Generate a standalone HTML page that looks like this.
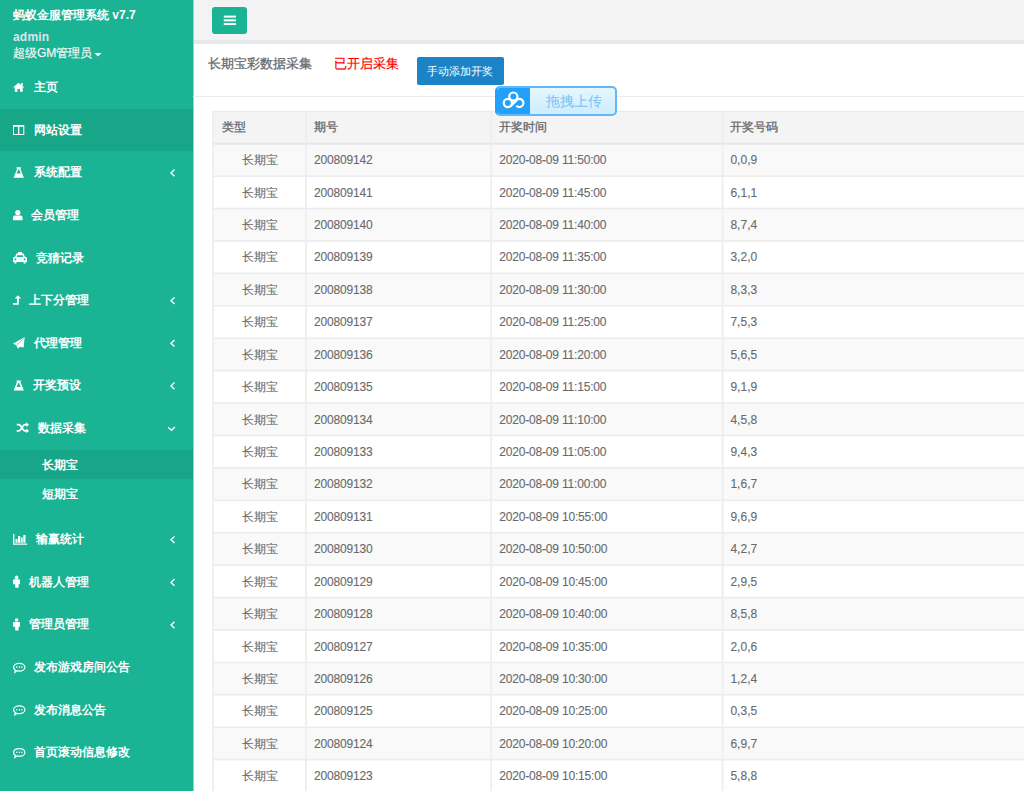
<!DOCTYPE html>
<html><head><meta charset="utf-8"><style>
html,body{margin:0;padding:0;width:1024px;height:791px;overflow:hidden;background:#fff;font-family:"Liberation Sans",sans-serif;}
#sb{position:absolute;left:0;top:0;width:193px;height:791px;background:#1ab394;color:#fff;overflow:hidden}
.nt{position:absolute;font-size:12px;line-height:18px;font-weight:bold;color:#fff;white-space:nowrap}
#top{position:absolute;left:194px;top:0;width:830px;height:40px;background:#f3f3f4;border-bottom:4px solid #e7eaec}
.th{position:absolute;font-size:12px;line-height:18px;color:#676a6c;white-space:nowrap;-webkit-text-stroke:0.3px #676a6c}
.td{position:absolute;font-size:12px;line-height:18px;color:#676a6c;white-space:nowrap;-webkit-text-stroke:0.1px #676a6c;letter-spacing:-0.18px}
</style></head><body>
<div id="sb">
<div style="position:absolute;left:13px;top:6px;font-size:12px;line-height:18px;font-weight:bold;white-space:nowrap">蚂蚁金服管理系统 v7.7</div>
<div style="position:absolute;left:13px;top:28px;font-size:12px;line-height:18px;font-weight:bold;color:#dfe4ed;letter-spacing:0.2px">admin</div>
<div style="position:absolute;left:13px;top:43.6px;font-size:12px;line-height:18px;color:#f3f6f6;white-space:nowrap;-webkit-text-stroke:0.2px #f3f6f6">超级GM管理员</div>
<svg style="position:absolute;left:0;top:0" width="120" height="70"><path d="M94.5 52.9H101.6L98.05 56.6Z" fill="#fff"/></svg>
<div style="position:absolute;left:0;top:109px;width:193px;height:42.2px;background:#18a689"></div>
<div class="nt" style="left:33.6px;top:78.10px">主页</div>
<div class="nt" style="left:33.6px;top:120.70px">网站设置</div>
<div class="nt" style="left:33.6px;top:163.30px">系统配置</div>
<div class="nt" style="left:31.2px;top:205.90px">会员管理</div>
<div class="nt" style="left:36.2px;top:248.50px">竞猜记录</div>
<div class="nt" style="left:29.2px;top:291.10px">上下分管理</div>
<div class="nt" style="left:34.2px;top:333.70px">代理管理</div>
<div class="nt" style="left:33.4px;top:376.30px">开奖预设</div>
<div class="nt" style="left:38.4px;top:418.90px">数据采集</div>
<div style="position:absolute;left:0;top:450.00px;width:193px;height:29.3px;background:#18a689"></div>
<div class="nt" style="left:41.9px;top:455.65px">长期宝</div>
<div class="nt" style="left:41.9px;top:484.95px">短期宝</div>
<div class="nt" style="left:36.4px;top:530.20px">输赢统计</div>
<div class="nt" style="left:28.6px;top:572.80px">机器人管理</div>
<div class="nt" style="left:28.7px;top:615.40px">管理员管理</div>
<div class="nt" style="left:34.3px;top:658.00px">发布游戏房间公告</div>
<div class="nt" style="left:34.3px;top:700.60px">发布消息公告</div>
<div class="nt" style="left:34.3px;top:743.20px">首页滚动信息修改</div>
<svg style="position:absolute;left:0;top:0" width="193" height="791" viewBox="0 0 193 791" fill="#fff"><path d="M2.96 9.56 L8.53 4.7 L11.1 6.9 V5.1 H12.74 V8.3 L14.33 9.56 H12.74 V13.65 H10 V10.9 H7.5 V13.65 H4.78 V9.56 Z" transform="translate(10,78)"/><path d="M13 124.9H24.3V134.9H13Z M14 126.8V133.9H18.1V126.8Z M19.3 126.8V133.9H23.3V126.8Z" fill-rule="evenodd"/><path transform="translate(10,162)" d="M6.6 5.3 H10.9 V6.8 H10.3 L13.9 15.7 H3.5 L7.2 6.8 H6.6 Z M8.25 7.5 H9.15 L10.85 11.6 H6.55 Z" fill-rule="evenodd"/><circle cx="17.8" cy="212.6" r="2.6"/><path d="M13 220.2V217.8C13 216.2 14.3 215.6 15.4 215.6H20.2C21.3 215.6 22.6 216.2 22.6 217.8V220.2Z"/><path transform="translate(13,251.9)" d="M5 0H9V1.6H10.5L12 5H12.6C13.4 5 14 5.6 14 6.4V10H12.6V11.5H10.6V10H3.4V11.5H1.4V10H0V6.4C0 5.6 .6 5 1.4 5H2L3.5 1.6H5Z M4.3 3.4L3.6 5H10.4L9.7 3.4Z M1.5 6.6V8.4H3.3V6.6Z M10.7 6.6V8.4H12.5V6.6Z" fill-rule="evenodd"/><path d="M14.7 298.6 L17.9 295.3 L21.1 298.6 H18.8 V304.7 H13 V303.1 H17.1 V298.6 Z"/><path d="M24.7 337.1 L13 343.7 L16.1 345.1 L18 348.7 L20 346.7 L23.6 347.6 Z"/><path d="M16.6 345.2 L23.9 338.2" stroke="#1ab394" stroke-width="0.6"/><path d="M16.6 380.6 H20.8 V381.8 H20.3 L23.9 390.6 H13.6 L17.1 381.8 H16.6 Z M18.25 382.9 H19.15 L20.7 387.0 H16.7 Z" fill-rule="evenodd"/><g fill="none" stroke="#fff" stroke-width="1.7"><path d="M16.7 424.7 H19 C21.2 424.7 22.6 430.8 24.8 430.8 H26.6"/><path d="M16.7 430.8 H19 C21.2 430.8 22.6 424.7 24.8 424.7 H26.6"/></g><path d="M26.2 422.3 L29 424.7 L26.2 427.1 Z M26.2 428.4 L29 430.8 L26.2 433.2 Z"/><path d="M13 534H14.4V543.6H27.2V544.7H13Z M15.5 539.1H17.5V542.7H15.5Z M18 535.9H20.2V542.7H18Z M20.8 537.5H22.7V542.7H20.8Z M23.3 535.1H25.5V542.7H23.3Z"/><g transform="translate(0,0)"><circle cx="16.6" cy="577.4" r="1.8"/><path d="M14 579.3H19.2C19.7 579.3 20 579.6 20 580.1V584.2H18.6V587.8H15.2V584.2H13V580.1C13 579.6 13.3 579.3 14 579.3Z"/></g><g transform="translate(0,42.60000000000002)"><circle cx="16.6" cy="577.4" r="1.8"/><path d="M14 579.3H19.2C19.7 579.3 20 579.6 20 580.1V584.2H18.6V587.8H15.2V584.2H13V580.1C13 579.6 13.3 579.3 14 579.3Z"/></g><g transform="translate(0,0)"><path d="M19.25 663.3C22.4 663.3 24.9 665 24.9 667.2S22.4 671 19.25 671C18.4 671 17.6 670.9 16.9 670.7L14.9 672.2L15.3 670C14.1 669.3 13.6 668.3 13.6 667.2C13.6 665 16.1 663.3 19.25 663.3Z" fill="none" stroke="#fff" stroke-width="1.25"/><circle cx="16.7" cy="667.1" r=".8"/><circle cx="19.4" cy="667.1" r=".8"/><circle cx="21.9" cy="667.1" r=".8"/></g><g transform="translate(0,42.60000000000002)"><path d="M19.25 663.3C22.4 663.3 24.9 665 24.9 667.2S22.4 671 19.25 671C18.4 671 17.6 670.9 16.9 670.7L14.9 672.2L15.3 670C14.1 669.3 13.6 668.3 13.6 667.2C13.6 665 16.1 663.3 19.25 663.3Z" fill="none" stroke="#fff" stroke-width="1.25"/><circle cx="16.7" cy="667.1" r=".8"/><circle cx="19.4" cy="667.1" r=".8"/><circle cx="21.9" cy="667.1" r=".8"/></g><g transform="translate(0,85.20000000000005)"><path d="M19.25 663.3C22.4 663.3 24.9 665 24.9 667.2S22.4 671 19.25 671C18.4 671 17.6 670.9 16.9 670.7L14.9 672.2L15.3 670C14.1 669.3 13.6 668.3 13.6 667.2C13.6 665 16.1 663.3 19.25 663.3Z" fill="none" stroke="#fff" stroke-width="1.25"/><circle cx="16.7" cy="667.1" r=".8"/><circle cx="19.4" cy="667.1" r=".8"/><circle cx="21.9" cy="667.1" r=".8"/></g><path d="M174.5 169.60000000000002 L171 172.90000000000003 L174.5 176.20000000000002" fill="none" stroke="#fff" stroke-width="1.35"/><path d="M174.5 297.40000000000003 L171 300.70000000000005 L174.5 304.00000000000006" fill="none" stroke="#fff" stroke-width="1.35"/><path d="M174.5 340.00000000000006 L171 343.30000000000007 L174.5 346.6000000000001" fill="none" stroke="#fff" stroke-width="1.35"/><path d="M174.5 382.59999999999997 L171 385.9 L174.5 389.2" fill="none" stroke="#fff" stroke-width="1.35"/><path d="M174.5 536.5 L171 539.8 L174.5 543.1" fill="none" stroke="#fff" stroke-width="1.35"/><path d="M174.5 579.1 L171 582.4 L174.5 585.7" fill="none" stroke="#fff" stroke-width="1.35"/><path d="M174.5 621.7 L171 625.0 L174.5 628.3000000000001" fill="none" stroke="#fff" stroke-width="1.35"/><path d="M168.1 427.3 L171.5 430.3 L174.9 427.1" fill="none" stroke="#fff" stroke-width="1.35"/></svg>
</div>
<div style="position:absolute;left:193px;top:0;width:1px;height:791px;background:#8cd9c9"></div>
<div id="top">
<div style="position:absolute;left:18px;top:6.6px;width:35px;height:27.4px;background:#1ab394;border-radius:3px"></div>
<svg style="position:absolute;left:0;top:0" width="100" height="40"><g fill="#fff"><rect x="29.75" y="15.6" width="12.2" height="2"/><rect x="29.75" y="19.35" width="12.2" height="2"/><rect x="29.75" y="23.05" width="12.2" height="2"/></g></svg>
</div>
<div style="position:absolute;left:193px;top:96px;width:831px;height:1px;background:#ebebeb"></div>
<div style="position:absolute;left:207.7px;top:55px;font-size:13px;line-height:18px;color:#676a6c;white-space:nowrap;-webkit-text-stroke:0.3px #676a6c">长期宝彩数据采集</div>
<div style="position:absolute;left:334px;top:55px;font-size:13px;line-height:18px;color:#f00;white-space:nowrap;-webkit-text-stroke:0.2px #f00">已开启采集</div>
<div style="position:absolute;left:416.7px;top:57.3px;width:87px;height:27.7px;background:#1c84c6;border-radius:2px;color:#fff;font-size:11px;line-height:28.4px;text-align:center;white-space:nowrap">手动添加开奖</div>
<svg style="position:absolute;left:0;top:0" width="1024" height="791" viewBox="0 0 1024 791"><rect x="212.2" y="111.2" width="827.8" height="32.499999999999986" fill="#f4f4f4"/><rect x="212.2" y="143.70" width="827.8" height="32.42" fill="#f9f9f9"/><rect x="212.2" y="208.54" width="827.8" height="32.42" fill="#f9f9f9"/><rect x="212.2" y="273.38" width="827.8" height="32.42" fill="#f9f9f9"/><rect x="212.2" y="338.22" width="827.8" height="32.42" fill="#f9f9f9"/><rect x="212.2" y="403.06" width="827.8" height="32.42" fill="#f9f9f9"/><rect x="212.2" y="467.90" width="827.8" height="32.42" fill="#f9f9f9"/><rect x="212.2" y="532.74" width="827.8" height="32.42" fill="#f9f9f9"/><rect x="212.2" y="597.58" width="827.8" height="32.42" fill="#f9f9f9"/><rect x="212.2" y="662.42" width="827.8" height="32.42" fill="#f9f9f9"/><rect x="212.2" y="727.26" width="827.8" height="32.42" fill="#f9f9f9"/><rect x="212.2" y="110.8" width="827.8" height="1.1" fill="#e9e9e9"/><rect x="212.2" y="142.7" width="827.8" height="2" fill="#e6e6e6"/><rect x="212.2" y="175.32" width="827.8" height="1.6" fill="#ececec"/><rect x="212.2" y="207.74" width="827.8" height="1.6" fill="#ececec"/><rect x="212.2" y="240.16" width="827.8" height="1.6" fill="#ececec"/><rect x="212.2" y="272.58" width="827.8" height="1.6" fill="#ececec"/><rect x="212.2" y="305.00" width="827.8" height="1.6" fill="#ececec"/><rect x="212.2" y="337.42" width="827.8" height="1.6" fill="#ececec"/><rect x="212.2" y="369.84" width="827.8" height="1.6" fill="#ececec"/><rect x="212.2" y="402.26" width="827.8" height="1.6" fill="#ececec"/><rect x="212.2" y="434.68" width="827.8" height="1.6" fill="#ececec"/><rect x="212.2" y="467.10" width="827.8" height="1.6" fill="#ececec"/><rect x="212.2" y="499.52" width="827.8" height="1.6" fill="#ececec"/><rect x="212.2" y="531.94" width="827.8" height="1.6" fill="#ececec"/><rect x="212.2" y="564.36" width="827.8" height="1.6" fill="#ececec"/><rect x="212.2" y="596.78" width="827.8" height="1.6" fill="#ececec"/><rect x="212.2" y="629.20" width="827.8" height="1.6" fill="#ececec"/><rect x="212.2" y="661.62" width="827.8" height="1.6" fill="#ececec"/><rect x="212.2" y="694.04" width="827.8" height="1.6" fill="#ececec"/><rect x="212.2" y="726.46" width="827.8" height="1.6" fill="#ececec"/><rect x="212.2" y="758.88" width="827.8" height="1.6" fill="#ececec"/><rect x="212.2" y="791.30" width="827.8" height="1.6" fill="#ececec"/><rect x="212.2" y="110.8" width="1.8" height="688.8" fill="#eeeeee"/><rect x="305.1" y="110.8" width="1.8" height="688.8" fill="#eeeeee"/><rect x="490.3" y="110.8" width="1.8" height="688.8" fill="#eeeeee"/><rect x="721.7" y="110.8" width="1.8" height="688.8" fill="#eeeeee"/></svg>
<div class="th" style="left:221.8px;top:118.25px">类型</div>
<div class="th" style="left:314.2px;top:118.25px">期号</div>
<div class="th" style="left:499.2px;top:118.25px">开奖时间</div>
<div class="th" style="left:730.4px;top:118.25px">开奖号码</div>
<div class="td" style="left:214px;width:92px;text-align:center;top:151.21px">长期宝</div>
<div class="td" style="left:314px;top:151.21px">200809142</div>
<div class="td" style="left:499.2px;top:151.21px">2020-08-09 11:50:00</div>
<div class="td" style="left:730.4px;letter-spacing:0.05px;top:151.21px">0,0,9</div>
<div class="td" style="left:214px;width:92px;text-align:center;top:183.63px">长期宝</div>
<div class="td" style="left:314px;top:183.63px">200809141</div>
<div class="td" style="left:499.2px;top:183.63px">2020-08-09 11:45:00</div>
<div class="td" style="left:730.4px;letter-spacing:0.05px;top:183.63px">6,1,1</div>
<div class="td" style="left:214px;width:92px;text-align:center;top:216.05px">长期宝</div>
<div class="td" style="left:314px;top:216.05px">200809140</div>
<div class="td" style="left:499.2px;top:216.05px">2020-08-09 11:40:00</div>
<div class="td" style="left:730.4px;letter-spacing:0.05px;top:216.05px">8,7,4</div>
<div class="td" style="left:214px;width:92px;text-align:center;top:248.47px">长期宝</div>
<div class="td" style="left:314px;top:248.47px">200809139</div>
<div class="td" style="left:499.2px;top:248.47px">2020-08-09 11:35:00</div>
<div class="td" style="left:730.4px;letter-spacing:0.05px;top:248.47px">3,2,0</div>
<div class="td" style="left:214px;width:92px;text-align:center;top:280.89px">长期宝</div>
<div class="td" style="left:314px;top:280.89px">200809138</div>
<div class="td" style="left:499.2px;top:280.89px">2020-08-09 11:30:00</div>
<div class="td" style="left:730.4px;letter-spacing:0.05px;top:280.89px">8,3,3</div>
<div class="td" style="left:214px;width:92px;text-align:center;top:313.31px">长期宝</div>
<div class="td" style="left:314px;top:313.31px">200809137</div>
<div class="td" style="left:499.2px;top:313.31px">2020-08-09 11:25:00</div>
<div class="td" style="left:730.4px;letter-spacing:0.05px;top:313.31px">7,5,3</div>
<div class="td" style="left:214px;width:92px;text-align:center;top:345.73px">长期宝</div>
<div class="td" style="left:314px;top:345.73px">200809136</div>
<div class="td" style="left:499.2px;top:345.73px">2020-08-09 11:20:00</div>
<div class="td" style="left:730.4px;letter-spacing:0.05px;top:345.73px">5,6,5</div>
<div class="td" style="left:214px;width:92px;text-align:center;top:378.15px">长期宝</div>
<div class="td" style="left:314px;top:378.15px">200809135</div>
<div class="td" style="left:499.2px;top:378.15px">2020-08-09 11:15:00</div>
<div class="td" style="left:730.4px;letter-spacing:0.05px;top:378.15px">9,1,9</div>
<div class="td" style="left:214px;width:92px;text-align:center;top:410.57px">长期宝</div>
<div class="td" style="left:314px;top:410.57px">200809134</div>
<div class="td" style="left:499.2px;top:410.57px">2020-08-09 11:10:00</div>
<div class="td" style="left:730.4px;letter-spacing:0.05px;top:410.57px">4,5,8</div>
<div class="td" style="left:214px;width:92px;text-align:center;top:442.99px">长期宝</div>
<div class="td" style="left:314px;top:442.99px">200809133</div>
<div class="td" style="left:499.2px;top:442.99px">2020-08-09 11:05:00</div>
<div class="td" style="left:730.4px;letter-spacing:0.05px;top:442.99px">9,4,3</div>
<div class="td" style="left:214px;width:92px;text-align:center;top:475.41px">长期宝</div>
<div class="td" style="left:314px;top:475.41px">200809132</div>
<div class="td" style="left:499.2px;top:475.41px">2020-08-09 11:00:00</div>
<div class="td" style="left:730.4px;letter-spacing:0.05px;top:475.41px">1,6,7</div>
<div class="td" style="left:214px;width:92px;text-align:center;top:507.83px">长期宝</div>
<div class="td" style="left:314px;top:507.83px">200809131</div>
<div class="td" style="left:499.2px;top:507.83px">2020-08-09 10:55:00</div>
<div class="td" style="left:730.4px;letter-spacing:0.05px;top:507.83px">9,6,9</div>
<div class="td" style="left:214px;width:92px;text-align:center;top:540.25px">长期宝</div>
<div class="td" style="left:314px;top:540.25px">200809130</div>
<div class="td" style="left:499.2px;top:540.25px">2020-08-09 10:50:00</div>
<div class="td" style="left:730.4px;letter-spacing:0.05px;top:540.25px">4,2,7</div>
<div class="td" style="left:214px;width:92px;text-align:center;top:572.67px">长期宝</div>
<div class="td" style="left:314px;top:572.67px">200809129</div>
<div class="td" style="left:499.2px;top:572.67px">2020-08-09 10:45:00</div>
<div class="td" style="left:730.4px;letter-spacing:0.05px;top:572.67px">2,9,5</div>
<div class="td" style="left:214px;width:92px;text-align:center;top:605.09px">长期宝</div>
<div class="td" style="left:314px;top:605.09px">200809128</div>
<div class="td" style="left:499.2px;top:605.09px">2020-08-09 10:40:00</div>
<div class="td" style="left:730.4px;letter-spacing:0.05px;top:605.09px">8,5,8</div>
<div class="td" style="left:214px;width:92px;text-align:center;top:637.51px">长期宝</div>
<div class="td" style="left:314px;top:637.51px">200809127</div>
<div class="td" style="left:499.2px;top:637.51px">2020-08-09 10:35:00</div>
<div class="td" style="left:730.4px;letter-spacing:0.05px;top:637.51px">2,0,6</div>
<div class="td" style="left:214px;width:92px;text-align:center;top:669.93px">长期宝</div>
<div class="td" style="left:314px;top:669.93px">200809126</div>
<div class="td" style="left:499.2px;top:669.93px">2020-08-09 10:30:00</div>
<div class="td" style="left:730.4px;letter-spacing:0.05px;top:669.93px">1,2,4</div>
<div class="td" style="left:214px;width:92px;text-align:center;top:702.35px">长期宝</div>
<div class="td" style="left:314px;top:702.35px">200809125</div>
<div class="td" style="left:499.2px;top:702.35px">2020-08-09 10:25:00</div>
<div class="td" style="left:730.4px;letter-spacing:0.05px;top:702.35px">0,3,5</div>
<div class="td" style="left:214px;width:92px;text-align:center;top:734.77px">长期宝</div>
<div class="td" style="left:314px;top:734.77px">200809124</div>
<div class="td" style="left:499.2px;top:734.77px">2020-08-09 10:20:00</div>
<div class="td" style="left:730.4px;letter-spacing:0.05px;top:734.77px">6,9,7</div>
<div class="td" style="left:214px;width:92px;text-align:center;top:767.19px">长期宝</div>
<div class="td" style="left:314px;top:767.19px">200809123</div>
<div class="td" style="left:499.2px;top:767.19px">2020-08-09 10:15:00</div>
<div class="td" style="left:730.4px;letter-spacing:0.05px;top:767.19px">5,8,8</div>
<div style="position:absolute;left:495px;top:86px;width:117.7px;height:25.65px;border:2px solid #63b6f8;border-left-color:#22a0fc;border-radius:5px;overflow:hidden;background:linear-gradient(#e6f6fe,#cdedfd)">
<div style="position:absolute;left:0;top:0;width:33.3px;height:100%;background:#22a0fc"></div>
<div style="position:absolute;left:49px;top:3.8px;font-size:14px;line-height:18px;color:#74c3f8;white-space:nowrap">拖拽上传</div>
</div>
<svg style="position:absolute;left:496px;top:86px" width="36" height="28" viewBox="0 0 36 28"><g fill="none" stroke="#fff" stroke-width="2.2"><circle cx="17.35" cy="10.6" r="4.1"/><circle cx="11.86" cy="17" r="4.1"/><path d="M14.75 19.85 L19.67 15.42 A4.05 4.05 0 1 1 20.39 19.71"/></g></svg>
</body></html>
